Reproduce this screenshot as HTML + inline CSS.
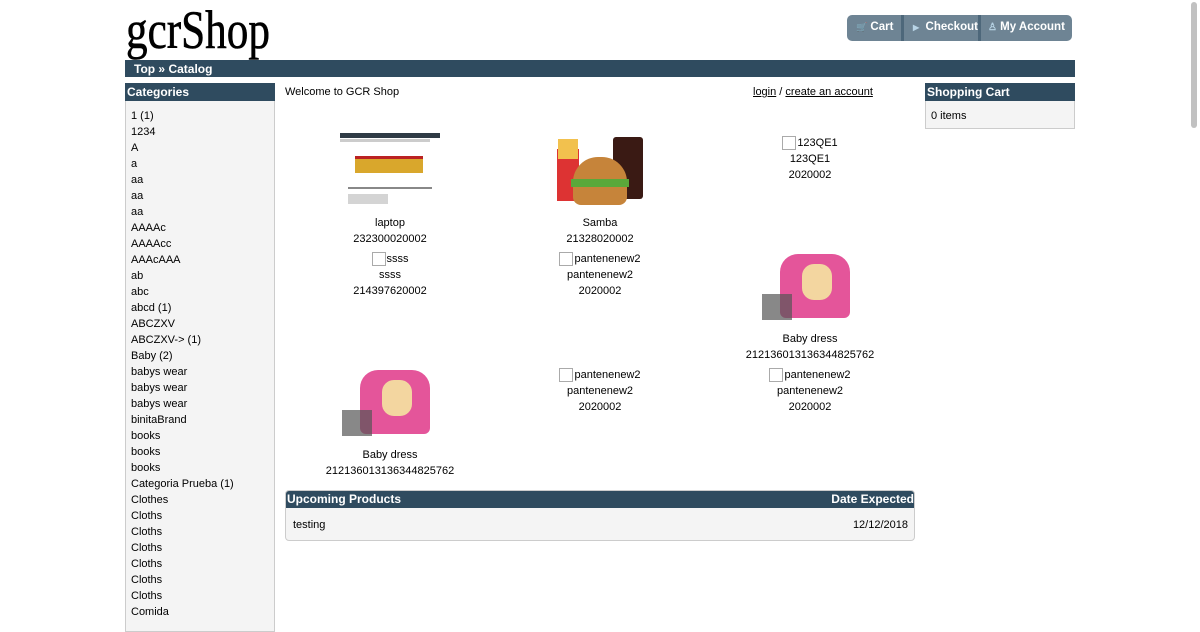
<!DOCTYPE html>
<html><head><meta charset="utf-8"><style>
body{margin:0;width:1200px;height:620px;overflow:hidden;background:#fff;font-family:"Liberation Sans",Arial,sans-serif;font-size:11px;color:#000;position:relative}
.a{position:absolute}
.bar{background:#2f4b5f;color:#fff;font-weight:bold;font-size:12px}
.logo{left:126px;top:0px;font-family:"Liberation Serif",serif;font-size:54px;letter-spacing:0;transform:scaleX(.8);transform-origin:left;line-height:60px;-webkit-text-stroke:0.6px #000}
.nav{left:847px;top:15px;width:225px;height:26px;background:#6e8494;border-radius:5px;color:#fff;font-weight:bold;font-size:11.5px}
.nav span{position:absolute;top:6px}
.sep{position:absolute;top:0;width:3px;height:26px;background:#4d677a}
.cats{left:125px;top:101px;width:148px;height:530px;background:#f4f4f4;border:1px solid #ccc;border-top:0}
.cats div{position:absolute;left:5px;line-height:16px;margin-top:1px}
.c{text-align:center;width:200px;line-height:16px;margin-top:1px}
.br{display:inline-block;width:14px;height:14px;border:1px solid #aaa;vertical-align:middle;box-sizing:border-box;margin-right:1px}
u{text-decoration:underline}
</style></head><body>
<div class="a logo">gcrShop</div>
<div class="a nav">
<span style="left:9px"><span style="position:static;color:#b8d4e6;font-size:9px">🛒</span> Cart</span>
<div class="sep" style="left:54px"></div>
<span style="left:66px"><span style="position:static;color:#b8d4e6;font-size:8px">▶</span>&nbsp; Checkout</span>
<div class="sep" style="left:131px"></div>
<span style="left:141px"><span style="position:static;color:#b8d4e6;font-size:10px">♙</span> My Account</span>
</div>
<div class="a bar" style="left:125px;top:60px;width:950px;height:17px;line-height:18px"><span style="margin-left:9px">Top » Catalog</span></div>
<div class="a bar" style="left:125px;top:83px;width:150px;height:18px;line-height:18px"><span style="margin-left:2px">Categories</span></div>
<div class="a cats">
<div style="top:6px">1 (1)</div><div style="top:22px">1234</div><div style="top:38px">A</div><div style="top:54px">a</div><div style="top:70px">aa</div><div style="top:86px">aa</div><div style="top:102px">aa</div><div style="top:118px">AAAAc</div><div style="top:134px">AAAAcc</div><div style="top:150px">AAAcAAA</div><div style="top:166px">ab</div><div style="top:182px">abc</div><div style="top:198px">abcd (1)</div><div style="top:214px">ABCZXV</div><div style="top:230px">ABCZXV-&gt; (1)</div><div style="top:246px">Baby (2)</div><div style="top:262px">babys wear</div><div style="top:278px">babys wear</div><div style="top:294px">babys wear</div><div style="top:310px">binitaBrand</div><div style="top:326px">books</div><div style="top:342px">books</div><div style="top:358px">books</div><div style="top:374px">Categoria Prueba (1)</div><div style="top:390px">Clothes</div><div style="top:406px">Cloths</div><div style="top:422px">Cloths</div><div style="top:438px">Cloths</div><div style="top:454px">Cloths</div><div style="top:470px">Cloths</div><div style="top:486px">Cloths</div><div style="top:502px">Comida</div>
</div>
<div class="a" style="left:285px;top:86px">Welcome to GCR Shop</div>
<div class="a" style="left:753px;top:86px"><u>login</u> / <u>create an account</u></div>
<div class="a bar" style="left:925px;top:83px;width:150px;height:18px;line-height:18px"><span style="margin-left:2px">Shopping Cart</span></div>
<div class="a" style="left:925px;top:101px;width:148px;height:27px;background:#f4f4f4;border:1px solid #ccc;border-top:0"><span style="position:absolute;left:5px;top:9px">0 items</span></div>

<div class="a" style="left:340px;top:133px;width:100px;height:80px;background:#fff">
<div style="height:5px;background:#2f3b45"></div><div style="margin-top:1px;height:3px;background:#ccc;width:90%"></div>
<div style="margin:14px 0 0 15px;width:68px;height:14px;background:#d9a72c;border-top:3px solid #b22"></div>
<div style="margin:14px 0 0 8px;width:84px;height:2px;background:#888"></div>
<div style="margin:5px 0 0 8px;width:40px;height:10px;background:#aaa;opacity:.5"></div>
</div>
<div class="a c" style="left:290px;top:214px">laptop<br>232300020002</div>
<div class="a" style="left:555px;top:137px;width:90px;height:71px">
<div style="position:absolute;left:2px;top:12px;width:22px;height:52px;background:#d33"></div>
<div style="position:absolute;left:3px;top:2px;width:20px;height:20px;background:#f2c14e"></div>
<div style="position:absolute;left:58px;top:0;width:30px;height:62px;background:#3a1a14;border-radius:3px"></div>
<div style="position:absolute;left:18px;top:20px;width:54px;height:48px;background:#c6843a;border-radius:25px 25px 8px 8px"></div>
<div style="position:absolute;left:16px;top:42px;width:58px;height:8px;background:#5aa83a"></div>
</div>
<div class="a c" style="left:500px;top:214px">Samba<br>21328020002</div>
<div class="a c" style="left:710px;top:134px"><span class="br"></span>123QE1<br>123QE1<br>2020002</div>
<div class="a c" style="left:290px;top:250px"><span class="br"></span>ssss<br>ssss<br>214397620002</div>
<div class="a c" style="left:500px;top:250px"><span class="br"></span>pantenenew2<br>pantenenew2<br>2020002</div>
<div class="a" style="left:762px;top:250px;width:96px;height:80px">
<div style="position:absolute;left:18px;top:4px;width:70px;height:64px;background:#e4559a;border-radius:18px 18px 6px 6px"></div>
<div style="position:absolute;left:40px;top:14px;width:30px;height:36px;background:#f3d6a0;border-radius:12px"></div>
<div style="position:absolute;left:0;top:44px;width:30px;height:26px;background:#555;opacity:.7"></div>
</div>
<div class="a c" style="left:710px;top:330px">Baby dress<br>212136013136344825762</div>
<div class="a" style="left:342px;top:366px;width:96px;height:80px">
<div style="position:absolute;left:18px;top:4px;width:70px;height:64px;background:#e4559a;border-radius:18px 18px 6px 6px"></div>
<div style="position:absolute;left:40px;top:14px;width:30px;height:36px;background:#f3d6a0;border-radius:12px"></div>
<div style="position:absolute;left:0;top:44px;width:30px;height:26px;background:#555;opacity:.7"></div>
</div>
<div class="a c" style="left:290px;top:446px">Baby dress<br>212136013136344825762</div>
<div class="a c" style="left:500px;top:366px"><span class="br"></span>pantenenew2<br>pantenenew2<br>2020002</div>
<div class="a c" style="left:710px;top:366px"><span class="br"></span>pantenenew2<br>pantenenew2<br>2020002</div>

<div class="a" style="left:285px;top:490px;width:628px;height:49px;border:1px solid #ccc;border-radius:4px;background:#f4f4f4;overflow:hidden">
<div class="bar" style="height:17px;line-height:17px;position:relative"><span style="margin-left:1px">Upcoming Products</span><span style="position:absolute;right:0">Date Expected</span></div>
<span style="position:absolute;left:7px;top:28px">testing</span><span style="position:absolute;right:6px;top:28px">12/12/2018</span>
</div>
<div class="a" style="left:1191px;top:2px;width:6px;height:126px;background:#c1c1c1;border-radius:3px"></div>
</body></html>
